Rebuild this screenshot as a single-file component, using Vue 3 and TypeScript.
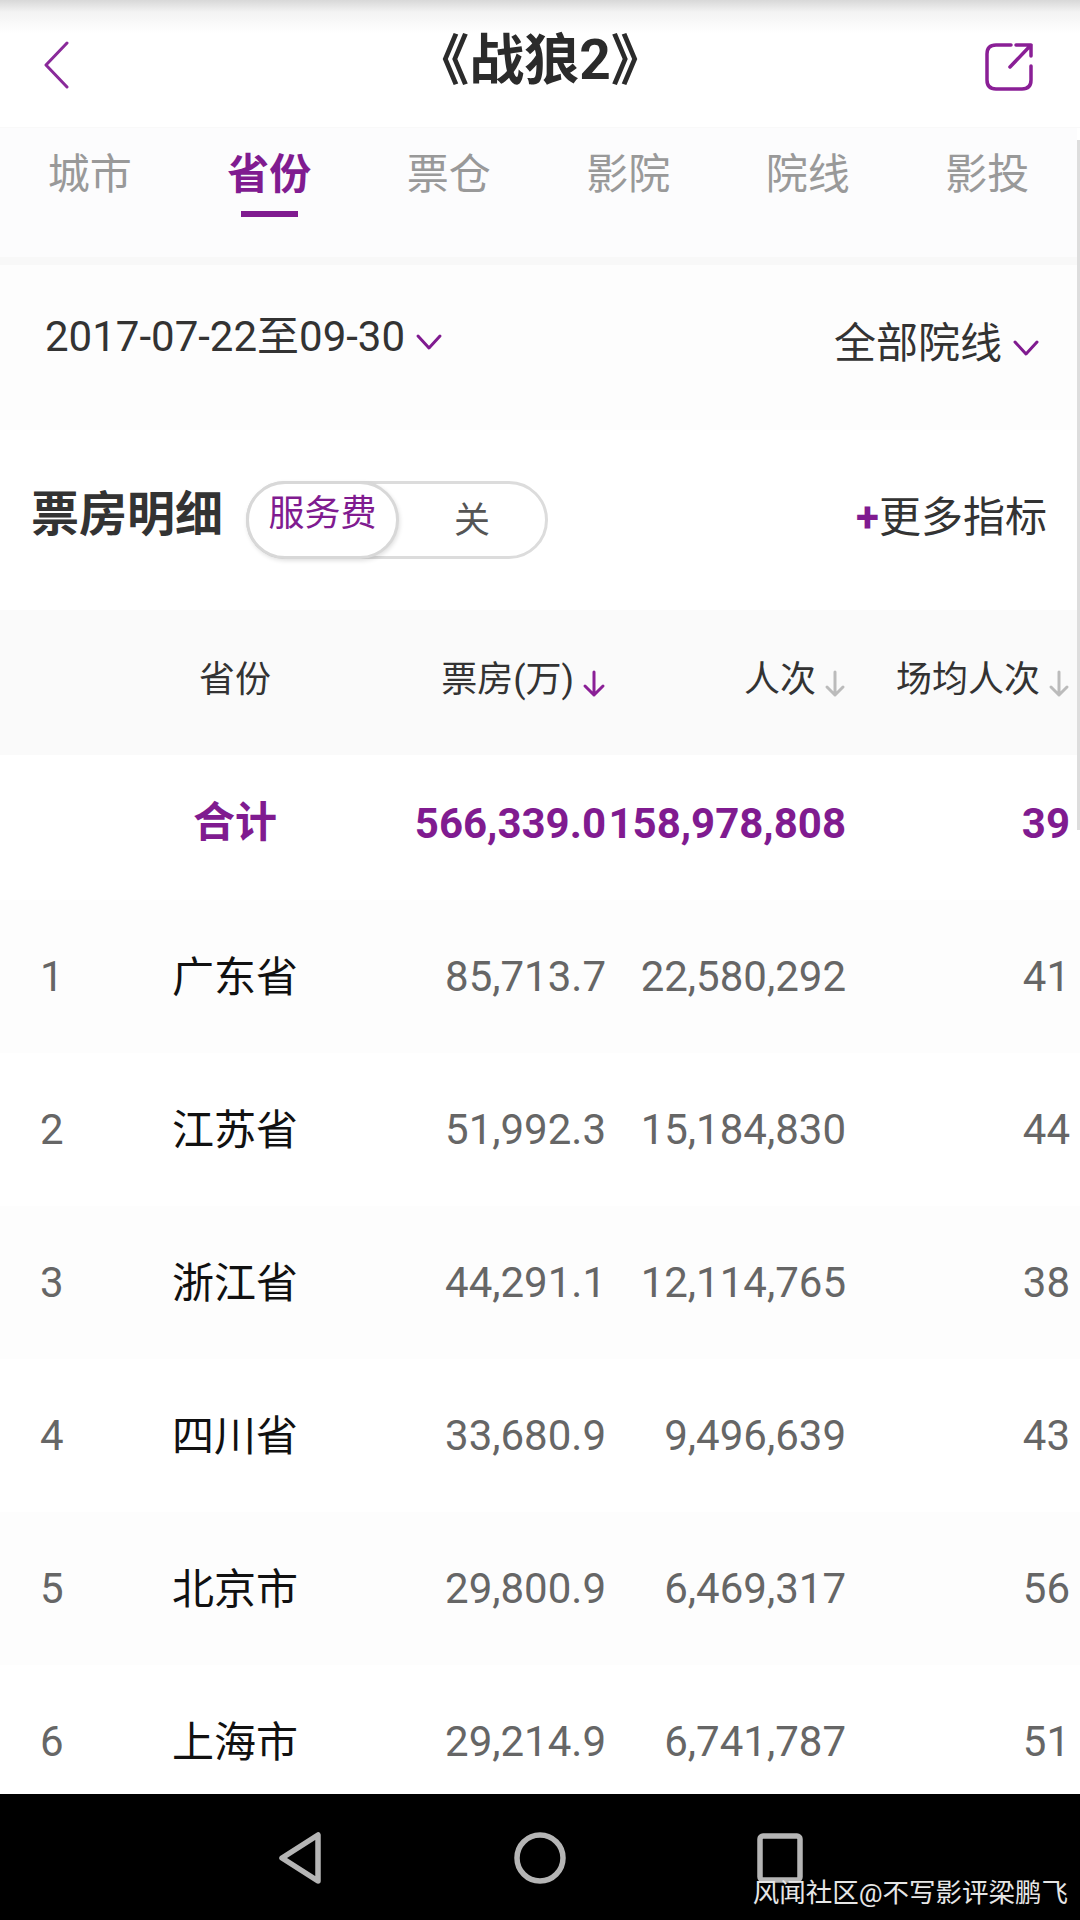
<template>
  <div class="page">
    <header class="topbar">
      <div class="topbar-left">
        <svg class="back" width="26" height="48" viewBox="0 0 26 48">
          <path d="M24 2 L3 24 L24 46" fill="none" stroke="#8a2a9a" stroke-width="3" stroke-linecap="round" stroke-linejoin="round" />
        </svg>
      </div>
      <h1 class="title">《战狼2》</h1>
      <div class="topbar-right">
        <svg width="50" height="50" viewBox="0 0 50 50">
          <path d="M27 3 H12 Q3 3 3 12 V38 Q3 47 12 47 H38 Q47 47 47 38 V24 M32 3 H47 V14 M47 3 L26 25" fill="none" stroke="#8a1f96" stroke-width="3.5" stroke-linecap="round" stroke-linejoin="round" />
        </svg>
      </div>
    </header>

    <nav class="tabs">
      <div v-for="tab in tabs" :key="tab" class="tab" :class="{ active: tab === activeTab }">
        <span>{{ tab }}</span>
        <i class="tab-line"></i>
      </div>
    </nav>

    <div class="filters">
      <div class="filter-date">
        <span>2017-07-22至09-30</span>
        <svg width="28" height="18" viewBox="0 0 28 18">
          <path d="M3 3 L14 15 L25 3" fill="none" stroke="#801b90" stroke-width="3" stroke-linecap="round" stroke-linejoin="round" />
        </svg>
      </div>
      <div class="filter-line">
        <span>全部院线</span>
        <svg width="28" height="18" viewBox="0 0 28 18">
          <path d="M3 3 L14 15 L25 3" fill="none" stroke="#801b90" stroke-width="3" stroke-linecap="round" stroke-linejoin="round" />
        </svg>
      </div>
    </div>

    <section class="section-head">
      <h2>票房明细</h2>
      <div class="toggle">
        <div class="knob">服务费</div>
        <div class="off">关</div>
      </div>
      <div class="more"><b>+</b>更多指标</div>
    </section>

    <div class="table">
      <div class="row head">
        <span></span>
        <span class="center">省份</span>
        <span class="num sort">票房(万)
          <svg width="24" height="28" viewBox="0 0 24 28"><path d="M12 2 V25 M3 16 L12 25 L21 16" fill="none" stroke="#8a1f96" stroke-width="3" stroke-linecap="round" stroke-linejoin="round" /></svg>
        </span>
        <span class="num sort">人次
          <svg width="22" height="28" viewBox="0 0 22 28"><path d="M11 2 V25 M3 17 L11 25 L19 17" fill="none" stroke="#bbb" stroke-width="3" stroke-linecap="round" stroke-linejoin="round" /></svg>
        </span>
        <span class="num sort">场均人次
          <svg width="22" height="28" viewBox="0 0 22 28"><path d="M11 2 V25 M3 17 L11 25 L19 17" fill="none" stroke="#bbb" stroke-width="3" stroke-linecap="round" stroke-linejoin="round" /></svg>
        </span>
      </div>

      <div class="row total">
        <span></span>
        <span class="center label">合计</span>
        <span class="num">566,339.0</span>
        <span class="num">158,978,808</span>
        <span class="num">39</span>
      </div>

      <div v-for="(item, i) in rows" :key="item.name" class="row body" :class="{ tinted: i % 2 === 0 }">
        <span class="rank">{{ i + 1 }}</span>
        <span class="center name">{{ item.name }}</span>
        <span class="num">{{ item.gross }}</span>
        <span class="num">{{ item.admissions }}</span>
        <span class="num">{{ item.avg }}</span>
      </div>
    </div>

    <footer class="navbar">
      <svg width="60" height="54" viewBox="0 0 60 54">
        <path d="M48 4 L48 50 L12 27 Z" fill="none" stroke="#b5b5b5" stroke-width="5.5" stroke-linejoin="round" />
      </svg>
      <svg width="60" height="54" viewBox="0 0 60 54">
        <circle cx="30" cy="27" r="23" fill="none" stroke="#b5b5b5" stroke-width="5.5" />
      </svg>
      <svg width="60" height="54" viewBox="0 0 60 54">
        <rect x="10" y="5" width="40" height="44" rx="3" fill="none" stroke="#b5b5b5" stroke-width="5.5" />
      </svg>
      <span class="watermark">风闻社区@不写影评梁鹏飞</span>
    </footer>

    <i class="scrollbar"></i>
  </div>
</template>

<script setup lang="ts">
interface ProvinceRow {
  name: string;
  gross: string;
  admissions: string;
  avg: number;
}

const tabs = ['城市', '省份', '票仓', '影院', '院线', '影投'];
const activeTab = '省份';

const rows: ProvinceRow[] = [
  { name: '广东省', gross: '85,713.7', admissions: '22,580,292', avg: 41 },
  { name: '江苏省', gross: '51,992.3', admissions: '15,184,830', avg: 44 },
  { name: '浙江省', gross: '44,291.1', admissions: '12,114,765', avg: 38 },
  { name: '四川省', gross: '33,680.9', admissions: '9,496,639', avg: 43 },
  { name: '北京市', gross: '29,800.9', admissions: '6,469,317', avg: 56 },
  { name: '上海市', gross: '29,214.9', admissions: '6,741,787', avg: 51 }
];
</script>

<style>
body {
  margin: 0;
  background: #fff;
}
</style>

<style scoped>
.page {
  position: relative;
  width: 1080px;
  height: 1920px;
  display: flex;
  flex-direction: column;
  overflow: hidden;
  background: #fff;
  font-family: Roboto, "Noto Sans CJK SC", sans-serif;
  color: #333;
}

.topbar {
  flex: none;
  height: 128px;
  display: grid;
  grid-template-columns: 1fr auto 1fr;
  padding: 0 46px;
  box-sizing: border-box;
  background: linear-gradient(#d8d8d8 0, #f3f3f3 12px, #fafafa 24px, #fff 34px);
  border-bottom: 1px solid #f9f9f9;
}

.topbar-left {
  padding-top: 41px;
}

.back {
  margin-left: -3px;
}

.topbar-right {
  padding-top: 42px;
  text-align: right;
}

.title {
  margin: 30px 0 0;
  font-size: 55px;
  line-height: 60px;
  font-weight: 700;
  color: #2b2b2b;
}

.tabs {
  flex: none;
  height: 129px;
  width: 1077px;
  display: grid;
  grid-template-columns: repeat(6, 1fr);
  background: #fcfcfd;
  border-bottom: 8px solid #f8f8f8;
}

.tab {
  display: flex;
  flex-direction: column;
  align-items: center;
  padding-top: 23px;
  font-size: 42px;
  line-height: 48px;
  color: #999;
}

.tab-line {
  width: 57px;
  height: 6px;
  margin-top: 12px;
}

.tab.active {
  color: #801b90;
  font-weight: 700;
}

.tab.active .tab-line {
  background: #801b90;
}

.filters {
  flex: none;
  height: 165px;
  display: flex;
  justify-content: space-between;
  box-sizing: border-box;
  padding: 48px 40px 0 45px;
  background: #fdfdfd;
  font-size: 42px;
  line-height: 48px;
}

.filter-date,
.filter-line {
  display: flex;
  align-items: center;
  gap: 10px;
  height: 48px;
}

.filter-date svg {
  margin-top: 10px;
}

.filter-line {
  margin-top: 7px;
}

.filter-line svg {
  margin-top: 8px;
}

.section-head {
  flex: none;
  height: 180px;
  display: flex;
  align-items: center;
  padding: 0 33px 0 31px;
}

.section-head h2 {
  margin: 0 23px 10px 0;
  font-size: 48px;
  line-height: 60px;
  font-weight: 700;
  color: #333;
}

.toggle {
  display: flex;
  align-items: center;
  width: 302px;
  height: 78px;
  box-sizing: border-box;
  border: 3px solid #dcdcdc;
  border-radius: 39px;
  font-size: 36px;
}

.knob {
  width: 153px;
  height: 78px;
  margin: 0 0 0 -3px;
  box-sizing: border-box;
  padding-bottom: 20px;
  display: flex;
  align-items: center;
  justify-content: center;
  border-radius: 39px;
  background: #fff;
  border: 3px solid #d8d8d8;
  box-shadow: 1px 2px 4px rgba(0, 0, 0, 0.12);
  color: #801b90;
}

.off {
  flex: 1;
  padding-bottom: 6px;
  text-align: center;
  color: #555;
}

.more {
  margin: 0 0 4px auto;
  font-size: 42px;
  line-height: 48px;
  color: #333;
}

.more b {
  color: #801b90;
}

.table {
  flex: 1;
  min-height: 0;
  overflow: hidden;
}

.row {
  display: grid;
  grid-template-columns: 88px 210px 266px 240px 224px;
  align-items: center;
  padding: 0 10px 0 42px;
  white-space: nowrap;
}

.center {
  text-align: center;
}

.num {
  text-align: right;
}

.head {
  height: 145px;
  box-sizing: border-box;
  padding-bottom: 14px;
  background: #fafafa;
  font-size: 36px;
  color: #333;
}

.sort {
  display: flex;
  justify-content: flex-end;
  align-items: center;
  gap: 8px;
}

.sort svg {
  margin-top: 16px;
}

.total {
  height: 145px;
  box-sizing: border-box;
  padding-bottom: 8px;
  color: #801b90;
  font-size: 42px;
  font-weight: 700;
}

.label {
  padding-bottom: 10px;
}

.body {
  height: 153px;
  font-size: 42px;
  color: #666;
}

.body.tinted {
  background: #fdfdfd;
}

.rank {
  margin-left: -2px;
}

.name {
  padding-bottom: 7px;
  font-size: 42px;
  color: #111;
}

.navbar {
  position: relative;
  flex: none;
  height: 126px;
  box-sizing: border-box;
  padding-top: 37px;
  display: flex;
  justify-content: center;
  align-items: flex-start;
  gap: 180px;
  background: #000;
}

.watermark {
  position: absolute;
  right: 12px;
  bottom: 13px;
  font-size: 26.5px;
  line-height: 28px;
  color: #e6e6e6;
}

.scrollbar {
  position: absolute;
  top: 140px;
  right: 0;
  width: 3px;
  height: 690px;
  background: #ddd;
}
</style>
